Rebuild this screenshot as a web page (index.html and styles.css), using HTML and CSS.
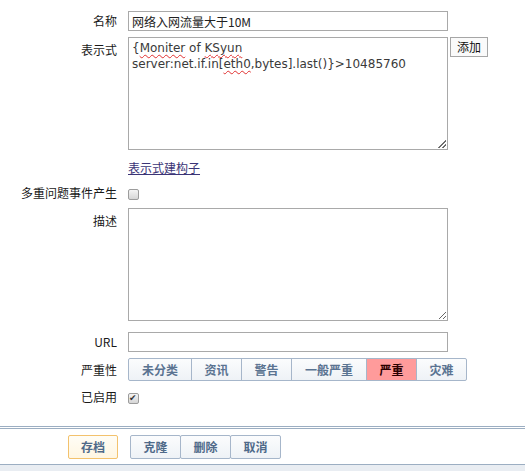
FILE: index.html
```html
<!DOCTYPE html>
<html lang="zh-CN">
<head>
<meta charset="utf-8">
<title>触发器</title>
<link rel="stylesheet" href="styles.css">
</head>
<body>
<form class="form">
  <div class="row r-name">
    <label class="lbl">名称</label>
    <div class="ctl"><input class="txt" type="text" value="网络入网流量大于10M"></div>
  </div>
  <div class="row r-expr">
    <label class="lbl lbl-top">表示式</label>
    <div class="ctl ctl-expr">
      <div class="area area-expr"><span class="sp">{<u class="typo">Moniter</u> of <u class="typo">KSyun</u></span><br><span>server:net.if.in[<u class="typo">eth0</u>,bytes].last()}&gt;10485760</span></div>
      <button type="button" class="btn-add">添加</button>
    </div>
  </div>
  <div class="row r-link">
    <span class="lbl"></span>
    <div class="ctl"><a class="link" href="#">表示式建构子</a></div>
  </div>
  <div class="row r-multi">
    <label class="lbl">多重问题事件产生</label>
    <div class="ctl"><input class="chk" type="checkbox"></div>
  </div>
  <div class="row r-desc">
    <label class="lbl lbl-top">描述</label>
    <div class="ctl"><textarea class="area"></textarea></div>
  </div>
  <div class="row r-url">
    <label class="lbl">URL</label>
    <div class="ctl"><input class="txt" type="text"></div>
  </div>
  <div class="row r-sev">
    <label class="lbl">严重性</label>
    <div class="ctl">
      <div class="seg">
        <button type="button" class="segb w3">未分类</button>
        <button type="button" class="segb w2">资讯</button>
        <button type="button" class="segb w2">警告</button>
        <button type="button" class="segb w4">一般严重</button>
        <button type="button" class="segb w2 on">严重</button>
        <button type="button" class="segb w2">灾难</button>
      </div>
    </div>
  </div>
  <div class="row r-en">
    <label class="lbl">已启用</label>
    <div class="ctl"><input class="chk" type="checkbox" checked></div>
  </div>
  <div class="footer">
    <button type="button" class="fbtn main">存档</button>
    <div class="fgroup">
      <button type="button" class="fbtn">克隆</button>
      <button type="button" class="fbtn">删除</button>
      <button type="button" class="fbtn">取消</button>
    </div>
  </div>
  <div class="bottom"></div>
</form>
</body>
</html>
```
FILE: styles.css
```css
html, body {
  margin: 0;
  padding: 0;
  background: #ffffff;
}
body {
  font-family: "Noto Sans CJK SC", "DejaVu Sans", sans-serif;
  font-size: 12px;
  color: #1a1a1a;
  width: 525px;
  height: 471px;
  overflow: hidden;
}
.form {
  display: flex;
  flex-direction: column;
  padding-top: 11px;
}
.row {
  display: grid;
  grid-template-columns: 117px 1fr;
  column-gap: 11px;
  align-items: center;
}
.lbl {
  text-align: right;
  line-height: 16px;
  white-space: nowrap;
}
.lbl-top {
  align-self: start;
  padding-top: 5px;
}
.ctl {
  display: flex;
  align-items: center;
}
.r-expr { margin-top: 6px; }
.r-link { margin-top: 10px; }
.r-multi { margin-top: 9px; }
.r-desc { margin-top: 7px; }
.r-url { margin-top: 11px; }
.r-sev { margin-top: 6px; }
.r-en { margin-top: 8px; }

.txt {
  box-sizing: border-box;
  width: 320px;
  height: 20px;
  margin: 0;
  border: 1px solid #a9a9a9;
  padding: 0 3px;
  font-family: "Noto Sans CJK SC", "DejaVu Sans", sans-serif;
  font-size: 12px;
  color: #222;
  outline: none;
}
.area {
  box-sizing: border-box;
  width: 320px;
  height: 113px;
  margin: 0;
  border: 1px solid #a9a9a9;
  padding: 2px 3px;
  font-family: "DejaVu Sans", sans-serif;
  font-size: 12px;
  line-height: 16px;
  color: #333;
  resize: both;
  overflow: hidden;
  display: block;
  outline: none;
  background: #fff;
}
.area-expr {
  position: relative;
  color: #3a3a3a;
}
.area-expr::after {
  content: "";
  position: absolute;
  right: 1px;
  bottom: 1px;
  width: 8px;
  height: 8px;
  background: linear-gradient(135deg, transparent 45%, #777 45%, #777 52%, transparent 52%, transparent 70%, #777 70%, #777 77%, transparent 77%);
}
.typo {
  text-decoration: underline wavy #e03030;
  text-decoration-thickness: 1px;
  text-underline-offset: 2px;
}
.ctl-expr {
  align-items: flex-start;
  gap: 2px;
}
.btn-add {
  box-sizing: border-box;
  width: 38px;
  height: 20px;
  margin: 0;
  padding: 0;
  border: 1px solid #a6a6a6;
  background: #fafafa;
  font-family: "Noto Sans CJK SC", sans-serif;
  font-size: 12px;
  line-height: 18px;
  color: #111;
}
.link {
  color: #3b3476;
  text-decoration: underline;
  line-height: 16px;
}
.chk {
  appearance: none;
  -webkit-appearance: none;
  box-sizing: border-box;
  width: 11px;
  height: 11px;
  margin: 0;
  border: 1px solid #9c9c9c;
  border-radius: 2px;
  background: linear-gradient(#f4f4f4, #d6d6d6);
  position: relative;
}
.r-multi .ctl, .r-en .ctl { height: 16px; padding-top: 2px; box-sizing: border-box; }
.chk:checked::after {
  content: "✔";
  position: absolute;
  left: 0;
  top: -3px;
  font-family: "DejaVu Sans", sans-serif;
  font-size: 9px;
  line-height: 14px;
  color: #333;
}
.seg {
  display: flex;
}
.segb {
  box-sizing: border-box;
  height: 23px;
  margin: 0 0 0 -1px;
  padding: 0;
  border: 1px solid #a6b6ca;
  background: linear-gradient(#fbfcfd, #eef2f6);
  font-family: "Noto Sans CJK SC", sans-serif;
  font-size: 12px;
  font-weight: bold;
  color: #5a7391;
  line-height: 21px;
  white-space: nowrap;
  text-align: center;
}
.segb.w2 { width: 51px; }
.segb.w3 { width: 64px; }
.segb.w4 { width: 76px; }
.segb:first-child {
  margin-left: 0;
  border-radius: 2px 0 0 2px;
}
.segb:last-child {
  border-radius: 0 2px 2px 0;
}
.segb.on {
  background: #ff9b9b;
  color: #2a0000;
}
.footer {
  margin-top: 21px;
  border-top: 3px double #9caec2;
  display: flex;
  align-items: center;
  gap: 12px;
  padding: 6px 0 5px 68px;
  border-bottom: 1px solid #9caec2;
}
.fgroup {
  display: flex;
}
.fgroup .fbtn + .fbtn {
  margin-left: -1px;
}
.fbtn {
  box-sizing: border-box;
  width: 51px;
  height: 24px;
  margin: 0;
  padding: 0;
  border: 1px solid #a6b6ca;
  border-radius: 2px;
  background: linear-gradient(#fbfcfd, #eef2f6);
  font-family: "Noto Sans CJK SC", sans-serif;
  font-size: 12px;
  font-weight: bold;
  color: #4f6a89;
  line-height: 22px;
}
.fbtn.main {
  width: 50px;
  border-color: #f3c26d;
  background: linear-gradient(#fffdf6, #fff6e2);
}
.bottom {
  height: 20px;
  background: #e9edf2;
}
```
